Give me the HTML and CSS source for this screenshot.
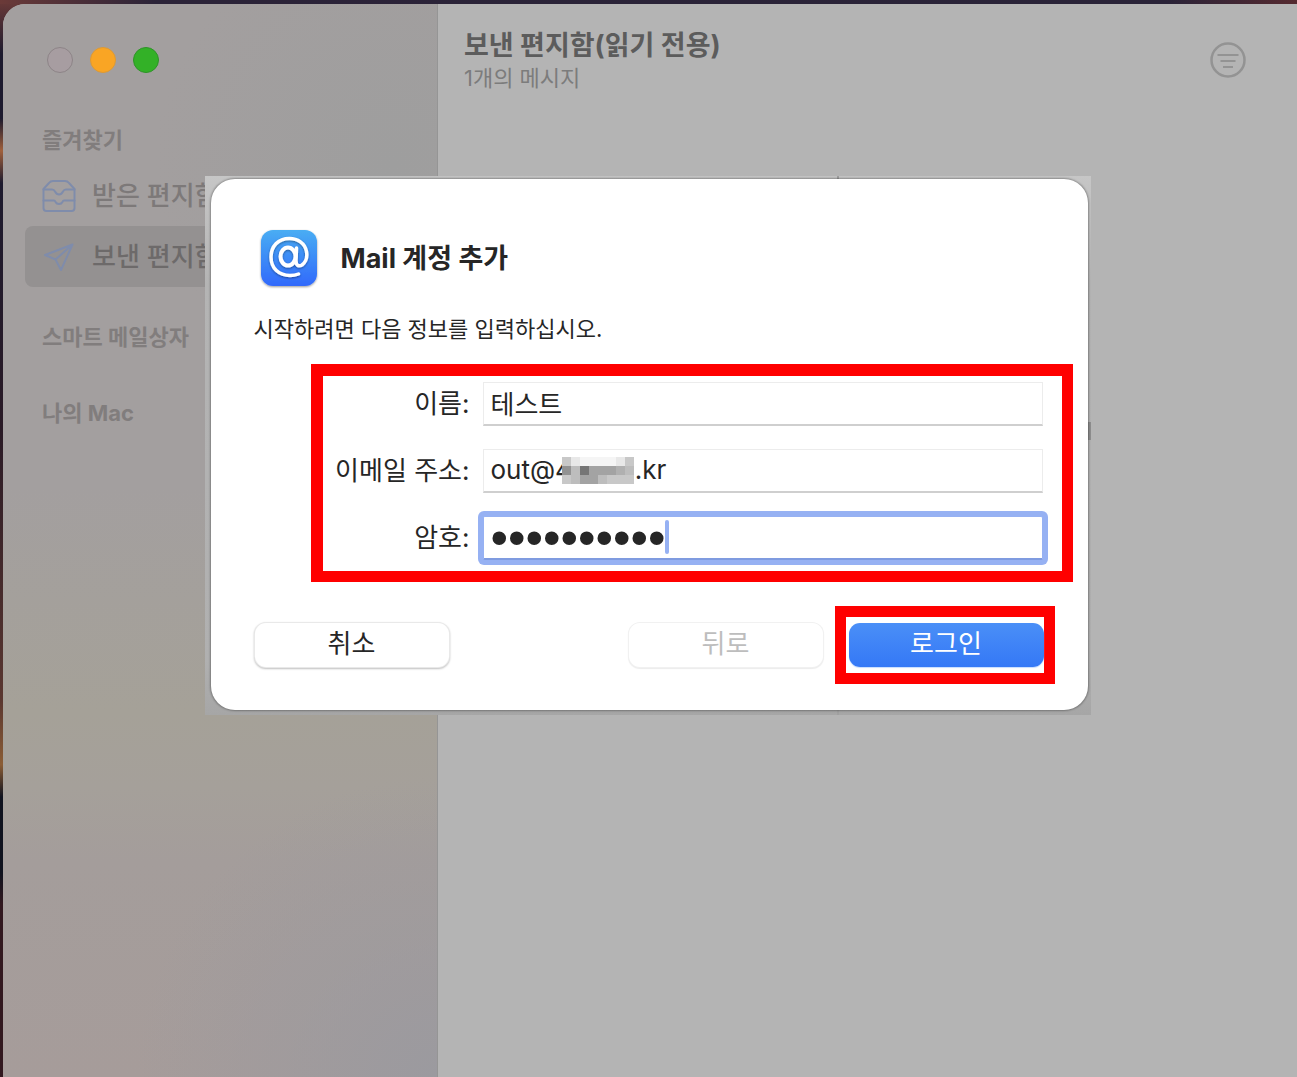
FILE: index.html
```html
<!DOCTYPE html>
<html lang="ko">
<head>
<meta charset="utf-8">
<meta name="viewport" content="width=device-width, initial-scale=1">
<title>Mail</title>
<link rel="stylesheet" href="styles.css">
</head>
<body>
<div class="window">
  <nav class="sidebar" aria-label="메일상자">
    <div class="lights">
      <span class="light light-off"></span>
      <span class="light light-min"></span>
      <span class="light light-max"></span>
    </div>
    <h2 class="section">즐겨찾기</h2>
    <a class="mailbox" href="#inbox">
      <svg class="mailbox-icon" viewBox="0 0 34 34" fill="none" stroke="currentColor" stroke-width="2" stroke-linejoin="round" stroke-linecap="round">
        <path d="M1.500 10 7 4Q8.500 2 11 2h12q2.500 0 4 2l5.500 6V29a3 3 0 0 1-3 3h-25a3 3 0 0 1-3-3z"/>
        <path d="M1.500 10.500H10q2 0 3 2 1.500 3 4 3t4-3q1-2 3-2h8.500M1.500 21.500H12q1 0 1.500 1.500 1 2 3.500 2t3.500-2q.5-1.500 1.500-1.500h10.500"/>
      </svg>
      <span>받은 편지함</span>
    </a>
    <a class="mailbox mailbox-selected" href="#sent" aria-current="page">
      <svg class="mailbox-icon" viewBox="0 0 34 34" fill="none" stroke="currentColor" stroke-width="2" stroke-linejoin="round" stroke-linecap="round">
        <path d="M30.500 4.500 3 15l10.500 4.500L19 30zM13.500 19.500l17-15"/>
      </svg>
      <span>보낸 편지함</span>
    </a>
    <h2 class="section section-smart">스마트 메일상자</h2>
    <h2 class="section section-mac">나의 Mac</h2>
  </nav>
  <main class="list">
    <div>
      <h1 class="list-title">보낸 편지함(읽기 전용)</h1>
      <p class="list-count">1개의 메시지</p>
    </div>
    <button class="filter" type="button" aria-label="필터">
      <svg viewBox="0 0 38 38" width="38" height="38" fill="none" stroke="currentColor" stroke-width="2">
        <circle cx="19" cy="19" r="16.500" stroke-width="2.500"/>
        <path d="M8.500 14h21M11.500 20h15M14 26h10"/>
      </svg>
    </button>
  </main>
</div>

<div class="overlay">
  <div class="sheet-frame">
    <form class="sheet" role="dialog" aria-labelledby="sheet-title">
      <header class="sheet-head">
        <svg class="app-icon" viewBox="0 0 60 64" width="60" height="64">
          <defs>
            <linearGradient id="app" x1="0" y1="0" x2="0" y2="1">
              <stop offset="0" stop-color="#49adf3"/>
              <stop offset="1" stop-color="#3169fb"/>
            </linearGradient>
            <filter id="soft" x="-20%" y="-20%" width="140%" height="140%">
              <feDropShadow dx="0" dy="1" stdDeviation="1" flood-color="#000" flood-opacity=".4"/>
            </filter>
          </defs>
          <rect x="2" y="3" width="56" height="56" rx="12" fill="url(#app)" filter="url(#soft)"/>
          <g fill="none" stroke="#fff" stroke-linecap="round" filter="url(#soft)">
            <ellipse cx="29" cy="29.500" rx="7.500" ry="9" stroke-width="4"/>
            <path d="M37.500 21 37 33.500c0 6 3.500 6 6 4.500 4-3 5.500-8 4.500-13.500C46 16 38.500 11.500 30.500 11.500c-11.500 0-18.500 8-18.500 18.500 0 11.500 8 18.500 19 18.500 3.500 0 6-.5 8.500-1.500" stroke-width="3.500"/>
          </g>
        </svg>
        <h2 class="sheet-title" id="sheet-title">Mail 계정 추가</h2>
      </header>
      <p class="sheet-intro">시작하려면 다음 정보를 입력하십시오.</p>

      <fieldset class="fields">
        <label for="name">이름:</label>
        <input class="field" id="name" type="text" value="테스트">
        <label for="email">이메일 주소:</label>
        <div class="field-wrap">
          <input class="field" id="email" type="text" value="out@4&#160;&#160;&#160;&#160;&#160;&#160;&#160;&#160;&#8198;.kr">
          <svg class="mosaic" viewBox="0 0 8 3" width="72" height="27" shape-rendering="crispEdges">
            <path fill="#fff" d="M0 0h8v3H0z"/>
            <path fill="#c8c8c8" d="M0 0h1v1H0zM7 0h1v1H7zM0 2h1v1H0zM5 2h3v1H5z"/>
            <path fill="#e8e8e8" d="M1 0h1v1H1zM6 0h1v1H6z"/>
            <path fill="#f5f5f5" d="M2 0h4v1H2z"/>
            <path fill="#929292" d="M0 1h1v1H0z"/>
            <path fill="#bdbdbd" d="M1 1h1v1H1zM7 1h1v1H7zM1 2h1v1H1zM4 2h1v1H4z"/>
            <path fill="#767676" d="M2 1h1v1H2z"/>
            <path fill="#a3a3a3" d="M3 1h3v1H3zM2 2h2v1H2z"/>
            <path fill="#b0b0b0" d="M6 1h1v1H6z"/>
          </svg>
        </div>
        <label for="password">암호:</label>
        <div class="field-wrap">
          <input class="field field-active" id="password" type="password" value="0123456789">
          <span class="caret"></span>
        </div>
      </fieldset>

      <footer class="actions">
        <button class="btn" type="button">취소</button>
        <button class="btn btn-back" type="button" disabled>뒤로</button>
        <div class="marked">
          <button class="btn btn-primary" type="submit">로그인</button>
        </div>
      </footer>
    </form>
  </div>
</div>
</body>
</html>
```

FILE: styles.css
```css
* {
  box-sizing: border-box;
}

body {
  margin: 0;
  min-height: 100vh;
  padding: 4px 0 0 3px;
  display: flex;
  position: relative;
  font-family: Inter, "Noto Sans CJK KR", sans-serif;
  font-size: 26px;
  line-height: 32px;
  color: #262626;
  background:
    linear-gradient(90deg, #6b3a38, #2b2338 12%, #2a2338 90%, #552a30) 0 0 / 100% 4px no-repeat,
    linear-gradient(#6b3a38 0, #1d1a2e 5%, #1d1a2e 11%, #a0603c 14%, #1d1a2e 17%, #2a1a26 40%, #5a3730 65%, #8b5d35 71%, #10131f 74%, #10131f 81%, #32181f 84%, #32181f);
}

h1,
h2,
p {
  margin: 0;
}

.window {
  flex: 1;
  display: flex;
  border-radius: 22px 0 0 0;
  overflow: hidden;
  background: #b4b4b4;
}

.sidebar {
  flex: 0 0 435px;
  padding: 43px 22px 0;
  border-right: 1px solid #959595;
  background:
    radial-gradient(circle at 100% 100%, #9b9a9f, transparent 300px),
    radial-gradient(circle at 90% 15%, #9e9e9e, transparent 240px),
    linear-gradient(#a39f9f 0, #a39f9f 45%, #a5a198 66%, #a5a09a 73%, #a49d9b 80%, #a69c9a 100%);
}

.lights {
  display: flex;
  gap: 17px;
  padding-left: 22px;
  margin-bottom: 53px;
}

.light {
  width: 26px;
  height: 26px;
  border-radius: 50%;
}

.light-off {
  background: #a79da1;
  border: 1px solid #8d8487;
}

.light-min {
  background: #f9a524;
  border: 1px solid #dd9a34;
}

.light-max {
  background: #33b127;
  border: 1px solid #2d9427;
}

.section {
  padding-left: 17px;
  font-size: 22px;
  font-weight: 700;
  line-height: 28px;
  color: #817d7d;
}

.section:first-of-type {
  margin-bottom: 11px;
}

.section-smart {
  margin-top: 36px;
}

.section-mac {
  margin-top: 48px;
}

.mailbox {
  display: flex;
  align-items: center;
  gap: 16px;
  height: 61px;
  padding-left: 17px;
  border-radius: 8px;
  font-weight: 500;
  color: #7d7979;
  text-decoration: none;
}

.mailbox-selected {
  background: #949191;
  color: #6d6a6a;
}

.mailbox-icon {
  width: 34px;
  height: 34px;
  color: #7f8cab;
}

.list {
  flex: 1;
  display: flex;
  justify-content: space-between;
  align-items: flex-start;
  padding: 26px 50px 0 26px;
}

.list-title {
  font-size: 27px;
  line-height: 32px;
  font-weight: 700;
  color: #5c5c5c;
}

.list-count {
  font-size: 22px;
  line-height: 32px;
  color: #7c7c7c;
}

.filter {
  margin-top: 11px;
  padding: 0;
  border: 0;
  background: none;
  color: #939393;
}

.filter svg {
  display: block;
}

/* Sheet shown above the mail window */
.overlay {
  position: absolute;
  inset: 0;
  padding: 176px 2px 0 0;
  display: flex;
  justify-content: center;
  align-items: flex-start;
}

.sheet-frame {
  width: 886px;
  max-width: 100%;
  padding: 3px 3px 5px 6px;
  background:
    linear-gradient(#a0a0a0, #a0a0a0) 632px 0 / 2px 100% no-repeat,
    linear-gradient(#8e8e8e, #8e8e8e) 100% 246px / 3px 18px no-repeat,
    linear-gradient(#c6c6c6, #b4b4b4 20%, #b0b0b0 90%, #a6a6a6);
}

.sheet {
  padding: 48px 15px 26px 43px;
  border-radius: 24px;
  background: #fff;
  box-shadow: 0 0 2px 1px rgba(0, 0, 0, .3);
}

.sheet-head {
  display: flex;
  align-items: center;
  gap: 22px;
  padding-left: 5px;
}

.app-icon {
  display: block;
}

.sheet-title {
  font-size: 27px;
  font-weight: 700;
}

.sheet-intro {
  margin: 22px 0 19px;
  font-size: 22px;
  line-height: 32px;
}

.fields {
  display: grid;
  grid-template-columns: 147px 1fr;
  align-items: center;
  gap: 23px 13px;
  margin: 0 0 24px 57px;
  padding: 6px 19px 11px 0;
  border: solid #f00;
  border-width: 12px 11px 11px 12px;
}

.fields label {
  text-align: right;
  white-space: nowrap;
}

.field-wrap {
  position: relative;
}

.field {
  display: block;
  width: 100%;
  height: 44px;
  padding: 0 7px 2px;
  border: 1px solid #ececec;
  border-bottom: 2px solid #cfcfcf;
  border-radius: 0;
  outline: 0;
  background: #fff;
  color: #262626;
  font: inherit;
}

.field-active {
  padding-bottom: 0;
  border: 1px solid #96b1f3;
  border-bottom: 2px solid #7f9be0;
  box-shadow: 0 0 0 5px #96b1f3;
  border-radius: 2px;
  font-family: "Liberation Sans", sans-serif;
  font-size: 50px;
  line-height: 40px;
}

.mosaic {
  position: absolute;
  left: 79px;
  top: 8px;
}

.caret {
  position: absolute;
  left: 182px;
  top: 4px;
  width: 4px;
  height: 34px;
  border-radius: 2px;
  background: #96b1f3;
}

.actions {
  display: flex;
  align-items: center;
  padding: 0 18px 0 1px;
}

.btn {
  width: 194px;
  height: 44px;
  padding: 0 0 2px;
  border: 0;
  border-radius: 11px;
  background: #fff;
  box-shadow: 0 0 0 1px #e9e9e9, 0 1px 2px 1px rgba(0, 0, 0, .25);
  color: #262626;
  font: inherit;
}

.btn-back {
  margin-left: auto;
  margin-right: 12px;
  color: #bdbdbd;
  box-shadow: 0 0 0 1px #f1f1f1, 0 1px 1px 1px rgba(0, 0, 0, .08);
}

.marked {
  padding: 6px 0 6px 3px;
  border: 11px solid #f00;
}

.btn-primary {
  display: block;
  width: 195px;
  background: linear-gradient(#4a8ff7, #3478f6);
  box-shadow: 0 1px 1px #c5dcff;
  color: #fff;
}
```
